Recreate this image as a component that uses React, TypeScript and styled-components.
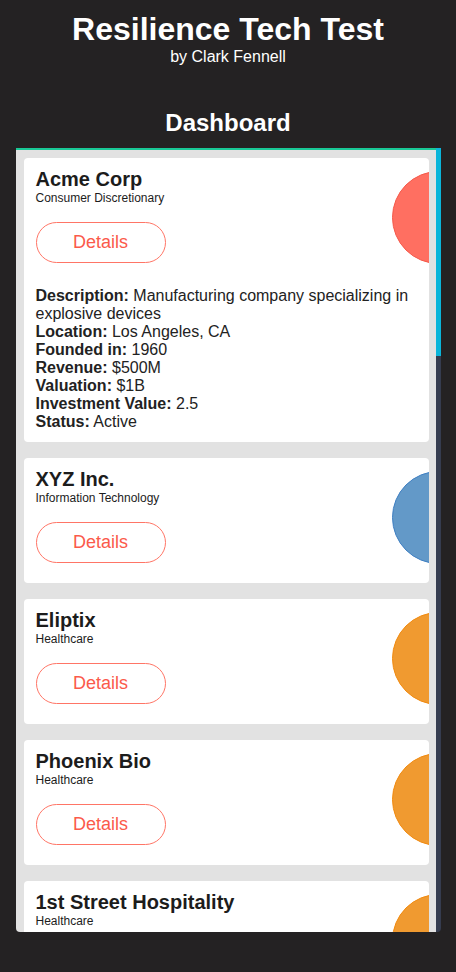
import React from "react";
import styled, { createGlobalStyle } from "styled-components";

const GlobalStyle = createGlobalStyle`
  html, body {
    margin: 0;
    padding: 0;
    background: #242223;
  }
  body {
    font-family: "Liberation Sans", Arial, sans-serif;
    color: #ffffff;
  }
`;

type Company = {
  name: string;
  sector: string;
  color: string;
  edge: string;
  open?: boolean;
  details?: [string, string][];
};

const companies: Company[] = [
  {
    name: "Acme Corp",
    sector: "Consumer Discretionary",
    color: "#ff6f61",
    edge: "#f4594a",
    open: true,
    details: [
      ["Description:", "Manufacturing company specializing in explosive devices"],
      ["Location:", "Los Angeles, CA"],
      ["Founded in:", "1960"],
      ["Revenue:", "$500M"],
      ["Valuation:", "$1B"],
      ["Investment Value:", "2.5"],
      ["Status:", "Active"],
    ],
  },
  { name: "XYZ Inc.", sector: "Information Technology", color: "#6399c8", edge: "#3f7fc2" },
  { name: "Eliptix", sector: "Healthcare", color: "#f09a30", edge: "#f08a10" },
  { name: "Phoenix Bio", sector: "Healthcare", color: "#f09a30", edge: "#f08a10" },
  { name: "1st Street Hospitality", sector: "Healthcare", color: "#f09a30", edge: "#f08a10" },
];

const Page = styled.div`
  display: flex;
  flex-direction: column;
  align-items: center;
  padding-top: 11px;
`;

const Title = styled.h1`
  margin: 0;
  font-size: 32px;
  font-weight: 700;
  line-height: normal;
`;

const Byline = styled.div`
  font-size: 16px;
  line-height: normal;
`;

const SectionTitle = styled.h2`
  margin: 43px 0 11px;
  font-size: 24px;
  font-weight: 700;
  line-height: normal;
`;

const Panel = styled.div`
  display: flex;
  width: 425px;
  height: 784px;
  border-radius: 0 0 4px 4px;
  overflow: hidden;
`;

const List = styled.div`
  flex: 1;
  display: flex;
  flex-direction: column;
  gap: 16px;
  padding: 8px 7px 0 8px;
  background: #e2e2e2;
  border-top: 2px solid #19c996;
  overflow: hidden;
`;

const ScrollTrack = styled.div`
  width: 5px;
  background: #353c4f;
  display: flex;
  flex-direction: column;
`;

const ScrollThumb = styled.div`
  height: 208px;
  background: #0bb5da;
`;

const Card = styled.div`
  position: relative;
  flex-shrink: 0;
  background: #ffffff;
  border-radius: 4px;
  padding: 10px 12px 4px;
  overflow: hidden;
  color: #1c1c1c;
`;

const Name = styled.div`
  font-size: 20px;
  font-weight: 700;
  line-height: normal;
`;

const Sector = styled.div`
  font-size: 12px;
  line-height: normal;
`;

const DetailsButton = styled.button`
  display: block;
  width: 130px;
  height: 41px;
  margin: 17px 0 16px;
  padding: 0;
  border: 1px solid #ff7566;
  border-radius: 21px;
  background: #ffffff;
  color: #fb5a4b;
  font-family: "Liberation Sans", Arial, sans-serif;
  font-size: 18px;
  cursor: pointer;
`;

const Info = styled.div`
  margin: 24px 0 7px;
  font-size: 16px;
  line-height: normal;
  color: #222222;
`;

const Label = styled.b`
  font-weight: 700;
`;

const Dot = styled.div<{ $fill: string; $edge: string }>`
  position: absolute;
  top: 13px;
  right: -56px;
  width: 91px;
  height: 91px;
  border-radius: 50%;
  background: ${({ $fill }) => $fill};
  border: 1px solid ${({ $edge }) => $edge};
`;

const CompanyCard = ({ company }: { company: Company }) => (
  <Card>
    <Name>{company.name}</Name>
    <Sector>{company.sector}</Sector>
    <DetailsButton>Details</DetailsButton>
    {company.open && company.details && (
      <Info>
        {company.details.map(([k, v]) => (
          <div key={k}>
            <Label>{k}</Label> {v}
          </div>
        ))}
      </Info>
    )}
    <Dot $fill={company.color} $edge={company.edge} />
  </Card>
);

export default function App() {
  return (
    <>
      <GlobalStyle />
      <Page>
        <Title>Resilience Tech Test</Title>
        <Byline>by Clark Fennell</Byline>
        <SectionTitle>Dashboard</SectionTitle>
        <Panel>
          <List>
            {companies.map((c) => (
              <CompanyCard key={c.name} company={c} />
            ))}
          </List>
          <ScrollTrack>
            <ScrollThumb />
          </ScrollTrack>
        </Panel>
      </Page>
    </>
  );
}
